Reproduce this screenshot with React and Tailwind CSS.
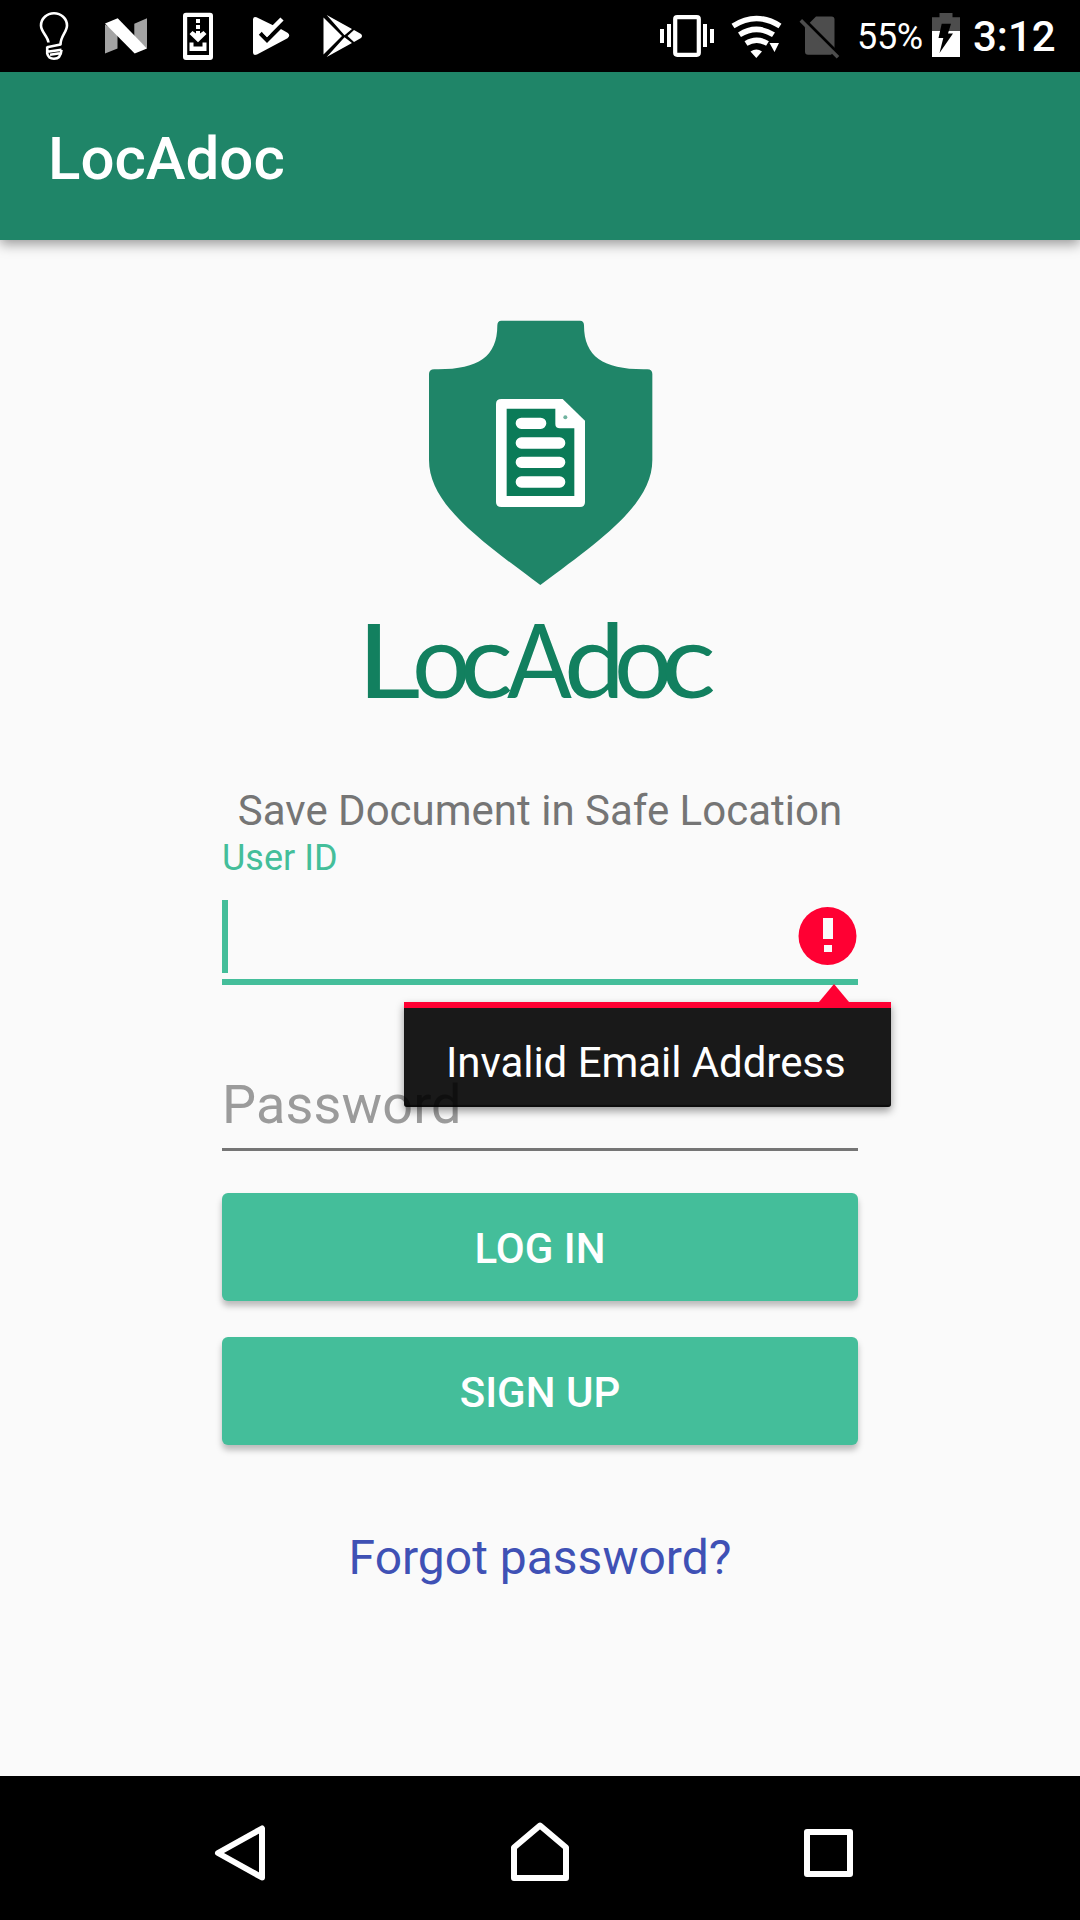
const GREEN = '#1f8568';

function StatusBar() {
  return (
    <header className="flex h-[72px] items-center bg-black pl-[18px] text-white">
      {/* Lightbulb */}
      <svg width="72" height="72" viewBox="0 0 72 72" fill="none" stroke="#fff" strokeWidth="2.6" strokeLinejoin="round">
        <path d="M30.4 42.5C30 36.5 23 32 23 25.500C23 18.500 29 13.300 36 13.300C43 13.300 49 18.500 49 25.500C49 32 42.500 36 42.500 44.500L29 47.200" />
        <path d="M43.500 49.800L29.200 51.800M29.200 46.500V53.500C30.200 57.600 32.500 58.700 36 58.700C40.300 58.700 43 56 43.500 49.800M32 54.800L42 53.200" />
      </svg>
      {/* Android N */}
      <svg width="72" height="72" viewBox="0 0 72 72">
        <path d="M15 24.500L27.500 32V48.500L15 53.500ZM44.300 23.700L57 18.300V48.500L44.300 37Z" fill="#a3a3a3" />
        <path d="M15 23.500L27.700 18.300L57 48.500L44.700 53.500Z" fill="#fff" />
      </svg>
      {/* System update */}
      <svg width="72" height="72" viewBox="0 0 72 72">
        <path fillRule="evenodd" fill="#fff" d="M24 12.700H48Q51 12.700 51 15.700V57Q51 60 48 60H24Q21 60 21 57V15.700Q21 12.700 24 12.700ZM25.200 17V55H47V17Z" />
        <path fill="#fff" d="M34 19H38V23H34ZM34 25H38V29H34ZM34 31H38V33.500L41.500 31L44.500 34L36 42.300L27.500 34L30.500 31L34 33.500ZM27.500 42.500H31.500V46.500H40.500V42.500H44.500V51H27.500Z" />
      </svg>
      {/* Play triangle with check mark */}
      <svg width="72" height="72" viewBox="0 0 72 72">
        <path fill="#fff" d="M19 19.500Q19 16 22.500 17.300L39.500 25.500L36 34L46 28.500L53.500 32.800Q57 35.500 53.500 38.200L23 54.500Q19 56 19 52.500Z" />
        <path d="M26.300 33.300L33 40L49 24" fill="none" stroke="#000" strokeWidth="4.200" />
        <path d="M30 31L33 34L48 19" fill="none" stroke="#fff" strokeWidth="4.500" />
      </svg>
      {/* Google Play */}
      <svg width="72" height="72" viewBox="0 0 72 72" fill="#fff">
        <path d="M17.500 17.500L36 36L17.500 54.500Z" />
        <path d="M20.700 15L46 29L38.500 35.300ZM20.700 57L46 43L38.500 37.300Z" />
        <path d="M48 30L55 34Q57 36 55 38L48 42L41.500 36Z" />
      </svg>

      {/* Vibrate */}
      <svg className="ml-[282px]" width="54" height="72" viewBox="0 0 54 72" fill="#fff">
        <path d="M0 29H4V43H0ZM7 24H11V47H7ZM43 24H47V47H43ZM50 29H54V43H50Z" />
        <rect x="15.200" y="17.200" width="23.600" height="37.600" rx="2" fill="none" stroke="#fff" strokeWidth="4.200" />
      </svg>
      {/* Wi-Fi */}
      <svg className="ml-[17px]" width="52" height="72" viewBox="0 0 52 72">
        <g fill="none" stroke="#fff" strokeWidth="5.500">
          <path d="M2 26Q25.500 11 49 26" />
          <path d="M8.500 34.800Q25.500 24 42.500 34.800" />
          <path d="M15 43.500Q25.500 37 36.500 43.500" />
        </g>
        <path fill="#fff" d="M19.500 51.500Q25.500 47.500 31 51.500L25.300 58ZM38.500 43H48L43.500 52Z" />
      </svg>
      {/* No SIM */}
      <svg className="ml-[15px]" width="42" height="72" viewBox="0 0 42 72">
        <path fill="#4d4d4d" d="M18 16.500H33.500Q36.500 16.500 36.500 19.500V51.500L33 54.700H10Q7 54.700 7 51.500V27.500Z" />
        <path d="M4.800 18.700L42 55.900" stroke="#000" strokeWidth="4.200" />
        <path d="M2.800 20.400L40 57.300" stroke="#4d4d4d" strokeWidth="3.600" />
      </svg>
      <span className="ml-[17px] w-[67px] pt-[2px] text-[36px] leading-[74px] tracking-[-0.3px]">55%</span>
      {/* Charging battery */}
      <svg className="ml-[8px]" width="28" height="72" viewBox="0 0 28 72">
        <path fill="#4d4d4d" d="M7.500 13H20.500V17.300H28V31H0V17.300H7.500Z" />
        <path fill="#fff" d="M0 31H28V57H0Z" />
        <path fill="#000" d="M9.700 23.700H19L16 33.500H21L7.500 53L11.300 38H6.500Z" />
      </svg>
      <span className="ml-[13px] pt-[2px] text-[42px] font-medium leading-[74px]">3:12</span>
    </header>
  );
}

function Logo() {
  return (
    <div className="flex flex-col items-center">
      <svg width="240" height="267" viewBox="60 60 720 801">
        <path
          fill={GREEN}
          d="M304 62H540Q552 62 552 76C552 170 610 208 730 208H742Q757 208 757 222V480C757 610 610 715 421 855C232 715 87 610 87 480V222Q87 208 103 208H115C235 208 292 170 292 76Q292 62 304 62Z"
        />
        <path
          fillRule="evenodd"
          fill="#fff"
          d="M304 297H488L555 362V606Q555 621 540 621H304Q288 621 288 606V312Q288 297 304 297Z"
        />
        <path fill="#0b7b58" d="M320 326H466V372Q466 385 480 385H523V588H320Z" />
        <path d="M364 370H422M364 429H479M364 487H479M364 546H479" stroke="#fff" strokeWidth="34" strokeLinecap="round" />
        <circle cx="496" cy="352" r="6" fill="#70b39f" />
      </svg>
      <svg className="-mb-[20px] -mt-[7px] overflow-visible" width="400" height="150" viewBox="-20 -30 400 150">
        <text y="88" fontSize="103" fontFamily="Lato, sans-serif" fill="#12805f">
          <tspan x="-3.500" textLength="64" lengthAdjust="spacingAndGlyphs">L</tspan>
          <tspan x="52">o</tspan>
          <tspan x="100" textLength="53" lengthAdjust="spacingAndGlyphs">c</tspan>
          <tspan x="147" textLength="65" lengthAdjust="spacingAndGlyphs">A</tspan>
          <tspan x="204" textLength="61" lengthAdjust="spacingAndGlyphs">d</tspan>
          <tspan x="254">o</tspan>
          <tspan x="301" textLength="55" lengthAdjust="spacingAndGlyphs">c</tspan>
        </text>
      </svg>
    </div>
  );
}

function ErrorPopup() {
  return (
    <div className="absolute left-[182px] top-[84px] z-10 w-[487px]">
      <svg className="ml-[415px] block" width="30" height="18" viewBox="0 0 30 18">
        <path d="M15 0L30 18H0Z" fill="#ff0033" />
      </svg>
      <div className="h-[105px] rounded-b-[3px] border-t-[6px] border-[#ff0033] bg-black/90 bg-clip-padding pl-[42px] pt-[30px] text-[42px] leading-[49px] tracking-[-0.05px] text-white shadow-[0_4px_8px_rgba(0,0,0,0.4),inset_0_-2px_1px_rgba(0,0,0,0.5)]">
        Invalid Email Address
      </div>
    </div>
  );
}

function ActionButton({ children }) {
  return (
    <button className="flex h-[108px] w-full items-center justify-center rounded-[6px] bg-[#44be9a] pt-[3px] text-[42px] font-medium leading-[49px] text-white shadow-[0_5px_6px_rgba(0,0,0,0.26)]">
      {children}
    </button>
  );
}

function NavBar() {
  return (
    <nav className="flex h-[144px] items-center bg-black pl-[204px]">
      <svg width="72" height="144" viewBox="0 0 72 144" fill="none" stroke="#fff" strokeWidth="6" strokeLinejoin="round">
        <path d="M58 52.500V101.500L14 77Z" />
      </svg>
      <svg className="ml-[228px]" width="72" height="144" viewBox="0 0 72 144" fill="none" stroke="#fff" strokeWidth="6" strokeLinejoin="round">
        <path d="M10 102V71.500L36 49.500L62 71.500V102Z" />
      </svg>
      <svg className="ml-[216px]" width="72" height="144" viewBox="0 0 72 144" fill="none" stroke="#fff" strokeWidth="6" strokeLinejoin="round">
        <path d="M15 56H58V98H15Z" />
      </svg>
    </nav>
  );
}

export default function App() {
  return (
    <div className="flex h-[1920px] w-[1080px] flex-col overflow-hidden bg-[#fafafa] font-[Roboto,sans-serif]">
      <StatusBar />
      <div className="flex h-[168px] items-center bg-[#1f8568] pl-[48px] pt-[6px] shadow-[0_4px_12px_rgba(0,0,0,0.4)]">
        <h1 className="text-[60px] font-medium leading-[70px] text-white">LocAdoc</h1>
      </div>

      <main className="flex flex-1 flex-col items-center pt-[80px]">
        <Logo />
        <p className="mt-[76px] text-[42px] leading-[49px] text-[#757575]">Save Document in Safe Location</p>

        <form className="mt-[2px] flex w-[636px] flex-col">
          <label className="text-[36px] leading-[42px] text-[#44be9a]">User ID</label>
          <div className="relative mt-[21px] flex h-[85px] items-start justify-between border-b-[6px] border-[#44be9a]">
            <span className="h-[73px] w-[6px] bg-[#44be9a]" />
            <svg className="mr-[1px] mt-[7px]" width="59" height="58" viewBox="0 0 59 58">
              <circle cx="29.500" cy="29" r="29" fill="#ff0033" />
              <path d="M25 11H35V32H25ZM26 38H34V45H26Z" fill="#fafafa" />
            </svg>
            <ErrorPopup />
          </div>
          <div className="mt-[88px] h-[78px] border-b-[3px] border-[#757575] text-[54px] leading-[63px] tracking-[0.15px] text-[#9b9b9b]">
            Password
          </div>
          <div className="mt-[42px] flex flex-col gap-[36px]">
            <ActionButton>LOG IN</ActionButton>
            <ActionButton>SIGN UP</ActionButton>
          </div>
        </form>
        <a className="mt-[85px] text-[48px] leading-[56px] text-[#3f51b5]">Forgot password?</a>
      </main>

      <NavBar />
    </div>
  );
}
